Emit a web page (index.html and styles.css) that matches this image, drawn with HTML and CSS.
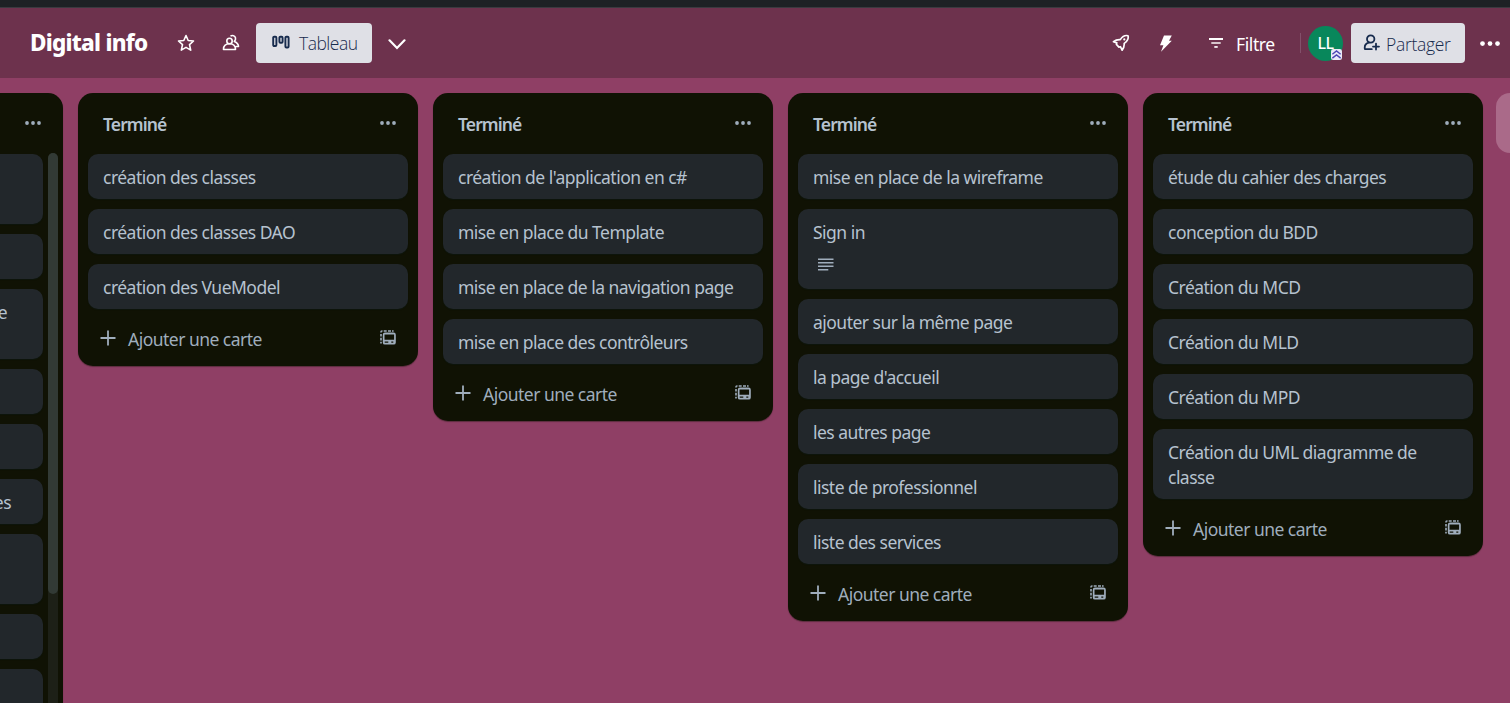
FILE: index.html
```html
<!DOCTYPE html>
<html lang="fr">
<head>
<meta charset="utf-8">
<title>Digital info</title>
<link rel="stylesheet" href="styles.css">
</head>
<body>
<svg class="sprite" aria-hidden="true">
  <symbol id="dots" viewBox="0 0 16 4"><circle cx="2" cy="2" r="1.9"/><circle cx="8" cy="2" r="1.9"/><circle cx="14" cy="2" r="1.9"/></symbol>
  <symbol id="plus" viewBox="0 0 16 16"><path d="M8 .5v15M.5 8h15" fill="none" stroke="currentColor" stroke-width="1.8"/></symbol>
  <symbol id="template" viewBox="0 0 16 15">
    <path d="M.2 2A1.800 1.800 0 0 1 2 .2h.5v1.600H1.800v.7H.2zM3.700.2h3v1.600h-3zM8 .2h3v1.600H8zM12 .2h1.600v1.600H12zM.2 4h1.600v2.600H.2zM.2 7.800h1.600v2.600H.2zM.2 11.800h1.600v1.600H.2z"/>
    <path fill-rule="evenodd" d="M5 2.600h8.600a2.200 2.200 0 0 1 2.200 2.200v7.600a2.200 2.200 0 0 1-2.200 2.200H5a2.200 2.200 0 0 1-2.200-2.200V4.800A2.200 2.200 0 0 1 5 2.600zM4.500 4.400V9.800h9.600V4.400zM4.700 11.400v1.400h3.600v-1.400zM11.300 11.400v1.400h2v-1.400z"/>
  </symbol>
</svg>

<div class="topbar"></div>
<header class="header">
  <h1 class="title">Digital info</h1>
  <svg class="star" viewBox="0 0 18 18"><path d="M9 1.500l2.200 5 5.300.5-4 3.700 1.200 5.400L9 13.400l-4.700 2.700 1.200-5.400-4-3.700 5.300-.5z" fill="none" stroke="currentColor" stroke-width="1.600" stroke-linejoin="round"/></svg>
  <svg class="people" viewBox="0 0 18 18"><g fill="none" stroke="currentColor" stroke-width="1.600" stroke-linejoin="round"><circle cx="7.500" cy="7" r="2.700"/><path d="M1.500 15.500c0-3.500 2-5.700 6-5.700s6 2.200 6 5.700zM8.500 2.200c1.700-1.300 4.500-.6 5 1.700.3 1.400-.2 2.600-1.200 3.500 2.600 1.100 4.200 2.700 4.200 5.100h-2.700"/></g></svg>
  <button class="btn view"><svg class="board-icon" viewBox="0 0 18 14"><g fill="none" stroke="currentColor" stroke-width="1.900"><rect x="1.200" y="1.700" width="3.200" height="9.300" rx="1"/><rect x="7.400" y="1.700" width="3.200" height="6.100" rx="1"/><rect x="13.400" y="1.700" width="3.200" height="10.800" rx="1"/></g></svg><span>Tableau</span></button>
  <svg class="chevron" viewBox="0 0 18 11"><path d="M1.500 1.300L9 8.900l7.500-7.600" fill="none" stroke="currentColor" stroke-width="2.200" stroke-linecap="round"/></svg>
  <div class="spacer"></div>
  <svg class="rocket" viewBox="0 0 18 18"><path d="M16 1.700c-2.700-.7-5.500.6-7.700 3.900-2.400-.2-4.500.2-6.800 2.100l3.300 1.200-.4 1.500 2.500 2.700 1.500-.4 1.700 3.500c1.800-2.400 2.300-4.400 2.100-6.800C15.300 7.300 16.800 4.600 16 1.700z" fill="none" stroke="currentColor" stroke-width="1.700" stroke-linejoin="round"/><circle cx="12.300" cy="5.400" r="1.100"/></svg>
  <svg class="bolt" viewBox="0 0 14 17"><path d="M5 .5h7.800L10 5.800h2.800L2 16.700l2.400-6.500H1z"/></svg>
  <div class="filter"><svg class="filter-icon" viewBox="0 0 14 10"><path d="M0 0h14v2H0z"/><path d="M2.300 4.100h9.400v1.800H2.300z" opacity=".8"/><path d="M5.300 8.100h3.400v1.700H5.300z"/></svg><span>Filtre</span></div>
  <div class="divider"></div>
  <div class="avatar">LL<svg class="badge" viewBox="0 0 12 12"><rect width="12" height="12" rx="2.500" fill="#e9e9f8"/><path d="M1.500 5.800L6 2.100l4.500 3.700M1.500 10L6 6.500l4.500 3.500" fill="none" stroke="#4b46b5" stroke-width="1.500"/></svg></div>
  <button class="btn share"><svg class="share-icon" viewBox="0 0 17 17"><g fill="none" stroke="currentColor" stroke-width="1.800"><circle cx="7.700" cy="5" r="3.700"/><path d="M8.800 15.200H1.900c-.6-3.300.8-5.900 4-6.600M13 9.600v6M10 12.600h6" stroke-linecap="round" stroke-linejoin="round"/></g></svg><span>Partager</span></button>
  <svg class="more"><use href="#dots"/></svg>
</header>

<main class="board">
  <section class="list clipped">
    <div class="list-head"><svg class="dots"><use href="#dots"/></svg></div>
    <div class="scroll-area">
      <div class="cards">
        <div class="card tall"></div><div class="card"></div><div class="card tall first-line">e</div><div class="card"></div><div class="card"></div><div class="card">es</div><div class="card tall"></div><div class="card"></div><div class="card"></div>
      </div>
      <div class="track"><div class="thumb"></div></div>
    </div>
  </section>

  <section class="list">
    <div class="list-head"><h2>Terminé</h2><svg class="dots"><use href="#dots"/></svg></div>
    <div class="cards">
      <div class="card">création des classes</div>
      <div class="card">création des classes DAO</div>
      <div class="card">création des VueModel</div>
    </div>
    <div class="list-foot"><svg class="plus"><use href="#plus"/></svg><span>Ajouter une carte</span><svg class="template"><use href="#template"/></svg></div>
  </section>

  <section class="list">
    <div class="list-head"><h2>Terminé</h2><svg class="dots"><use href="#dots"/></svg></div>
    <div class="cards">
      <div class="card">création de l'application en c#</div>
      <div class="card">mise en place du Template</div>
      <div class="card">mise en place de la navigation page</div>
      <div class="card">mise en place des contrôleurs</div>
    </div>
    <div class="list-foot"><svg class="plus"><use href="#plus"/></svg><span>Ajouter une carte</span><svg class="template"><use href="#template"/></svg></div>
  </section>

  <section class="list">
    <div class="list-head"><h2>Terminé</h2><svg class="dots"><use href="#dots"/></svg></div>
    <div class="cards">
      <div class="card">mise en place de la wireframe</div>
      <div class="card described">Sign in<svg class="lines" viewBox="0 0 16 13"><path d="M0 .5h15.500v1.600H0zM0 4h15.500v1.600H0zM0 7.500h15.500v1.600H0zM0 10.900h10.300v1.600H0z"/></svg></div>
      <div class="card">ajouter sur la même page</div>
      <div class="card">la page d'accueil</div>
      <div class="card">les autres page</div>
      <div class="card">liste de professionnel</div>
      <div class="card">liste des services</div>
    </div>
    <div class="list-foot"><svg class="plus"><use href="#plus"/></svg><span>Ajouter une carte</span><svg class="template"><use href="#template"/></svg></div>
  </section>

  <section class="list">
    <div class="list-head"><h2>Terminé</h2><svg class="dots"><use href="#dots"/></svg></div>
    <div class="cards">
      <div class="card">étude du cahier des charges</div>
      <div class="card">conception du BDD</div>
      <div class="card">Création du MCD</div>
      <div class="card">Création du MLD</div>
      <div class="card">Création du MPD</div>
      <div class="card">Création du UML diagramme de<br>classe</div>
    </div>
    <div class="list-foot"><svg class="plus"><use href="#plus"/></svg><span>Ajouter une carte</span><svg class="template"><use href="#template"/></svg></div>
  </section>
  <div class="add-list"></div>
</main>
</body>
</html>
```
FILE: styles.css
```css
* { box-sizing: border-box; }
body {
  margin: 0;
  height: 703px;
  overflow: hidden;
  display: flex;
  flex-direction: column;
  background: #8f3f65;
  font: 17.5px/25px "Noto Sans", "Open Sans", sans-serif;
  letter-spacing: -0.52px;
  color: #b6c2cf;
}
svg { display: block; flex: none; fill: currentColor; }
.sprite { position: absolute; width: 0; height: 0; }
.topbar { flex: none; height: 8px; background: #1d2125; border-bottom: 1px solid #3a3a40; }

.header {
  flex: none;
  height: 70px;
  display: flex;
  align-items: center;
  padding: 0 9px 0 30px;
  background: #6d324d;
  color: #fff;
}
.title { margin: 0; width: 147px; font-size: 22.5px; line-height: 30px; font-weight: 800; letter-spacing: -0.75px; white-space: nowrap; }
.star { width: 18px; height: 18px; }
.people { width: 18px; height: 18px; margin-left: 27px; }
.btn {
  display: flex;
  align-items: center;
  height: 40px;
  padding: 0;
  border: 0;
  border-radius: 4px;
  background: #dfe0e6;
  color: #172b4d;
  font: 300 17.5px/25px "Open Sans", "Noto Sans", sans-serif;
  letter-spacing: -0.3px;
}
.btn span { padding-top: 2px; }
.view { width: 116px; margin-left: 16px; padding-left: 16px; letter-spacing: -0.5px; }
.view span { padding-top: 1px; }
.board-icon { width: 18px; height: 14px; margin: 0 9px 3px 0; }
.chevron { width: 18px; height: 11px; margin: 2px 0 0 16px; }
.spacer { flex: 1; }
.rocket { width: 18px; height: 18px; }
.bolt { width: 14px; height: 17px; margin-left: 29px; }
.filter { display: flex; align-items: center; width: 91px; margin-left: 36px; }
.filter span { padding-top: 3px; letter-spacing: -0.4px; }
.filter-icon { width: 14px; height: 10px; margin: 0 13px 1px 0; }
.divider { width: 1px; height: 20px; background: #83506a; }
.avatar {
  position: relative;
  width: 35px;
  height: 35px;
  margin: 0 8px 0 7px;
  border-radius: 50%;
  background: #08875b;
  font-size: 16px;
  line-height: 35px;
  font-weight: 500;
  text-align: center;
}
.badge { position: absolute; right: 1px; bottom: 1px; width: 11px; height: 11px; }
.share { width: 114px; padding-left: 12px; }
.share-icon { width: 17px; height: 17px; margin: 0 6px 1px 0; }
.more { width: 20px; height: 5px; margin-left: 15px; margin-right: 1px; }

.board { flex: 1; display: flex; align-items: flex-start; gap: 15px; padding-top: 15px; overflow: hidden; }
.list { flex: none; width: 340px; padding: 0 10px; border-radius: 15px; background: #101204; box-shadow: 0 1px 1px #10120466; }
.list-head { display: flex; justify-content: space-between; height: 61px; padding: 19px 12px 0 15px; }
.list-head h2 { margin: 0; font-size: 17.5px; line-height: 25px; font-weight: 600; letter-spacing: -0.9px; }
.dots { width: 16px; height: 4px; margin-top: 9px; color: #9fadbc; }
.cards { display: flex; flex-direction: column; gap: 10px; }
.card { flex: none; min-height: 45px; padding: 11px 15px 9px; border-radius: 10px; background: #22272b; box-shadow: 0 1px 1px #091e2440; white-space: nowrap; }
.tall { min-height: 70px; }
.described { height: 80px; }
.lines { width: 16px; height: 13px; margin: 13px 0 0 5px; color: #9fadbc; }
.list-foot { display: flex; align-items: center; height: 57px; padding: 3px 12px 0; color: #9fadbc; }
.plus { width: 16px; height: 16px; margin: 0 12px 3px 0; }
.template { width: 16px; height: 15px; margin: 0 0 3px auto; }

.clipped { width: 63px; height: 610px; padding: 0; overflow: hidden; border-radius: 0 15px 0 0; }
.clipped .list-head { justify-content: flex-end; padding-right: 22px; }
.scroll-area { display: flex; gap: 5px; }
.clipped .cards { width: 43px; }
.clipped .card { display: flex; justify-content: flex-end; padding-right: 32px; padding-left: 0; border-radius: 0 10px 10px 0; }
.clipped .first-line { padding-right: 36px; }
.track { width: 10px; height: 560px; margin-top: -1px; border-radius: 5px; background: #1d2017; }
.thumb { height: 441px; border-radius: 5px; background: #323a35; }
.add-list { flex: none; width: 14px; height: 60px; margin-left: -2px; border-radius: 15px 0 0 15px; background: #aa6a89; }
```
